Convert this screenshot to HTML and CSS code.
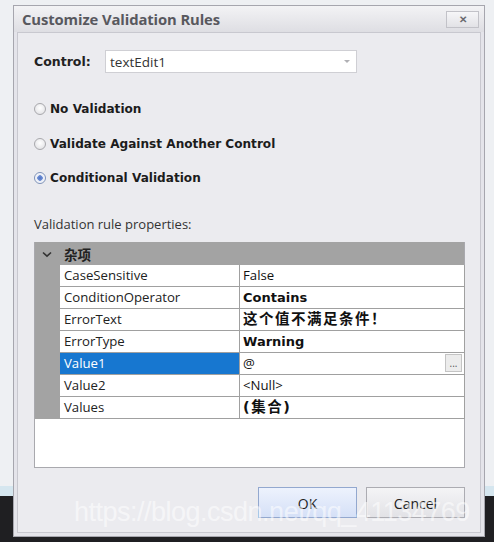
FILE: index.html
```html
<!DOCTYPE html>
<html lang="en">
<head>
    <meta charset="UTF-8">
    <title>Customize Validation Rules</title>
    <link rel="stylesheet" href="styles.css">
</head>
<body>
    <!-- Dialog window -->
    <div class="dialog">
        <div class="title-bar">
            <span class="title">Customize Validation Rules</span>
            <span class="close-btn">&#x2715;</span>
        </div>

        <div class="dialog-body">
            <div class="control-row">
                <span class="control-label">Control:</span>
                <div class="combo">
                    <span>textEdit1</span>
                    <span class="combo-arrow"></span>
                </div>
            </div>

            <div class="radio-list">
                <div class="radio-item"><span class="radio"></span>No Validation</div>
                <div class="radio-item"><span class="radio"></span>Validate Against Another Control</div>
                <div class="radio-item"><span class="radio checked"></span>Conditional Validation</div>
            </div>

            <div class="props-label">Validation rule properties:</div>

            <!-- Property grid -->
            <div class="prop-grid">
                <div class="category">
                    <span class="chevron">
                        <svg width="10" height="7" viewBox="0 0 10 7"><path d="M1 1.5 L5 5.2 L9 1.5" fill="none" stroke="#333" stroke-width="1.6"/></svg>
                    </span>
                    <span class="category-name">杂项</span>
                </div>
                <div class="rows">
                    <div class="row"><div class="name">CaseSensitive</div><div class="value">False</div></div>
                    <div class="row"><div class="name">ConditionOperator</div><div class="value bold">Contains</div></div>
                    <div class="row"><div class="name">ErrorText</div><div class="value bold cjk">这个值不满足条件！</div></div>
                    <div class="row"><div class="name">ErrorType</div><div class="value bold">Warning</div></div>
                    <div class="row selected"><div class="name">Value1</div><div class="value">@<span class="ellipsis">...</span></div></div>
                    <div class="row"><div class="name">Value2</div><div class="value">&lt;Null&gt;</div></div>
                    <div class="row"><div class="name">Values</div><div class="value bold cjk">(集合)</div></div>
                </div>
            </div>

            <div class="buttons">
                <div class="btn btn-ok">OK</div>
                <div class="btn">Cancel</div>
            </div>
        </div>
    </div>

    <div class="watermark">https://blog.csdn.net/qq_41134769</div>
</body>
</html>
```

FILE: styles.css
```css
/* General Styles */
body {
    margin: 0;
    padding: 0;
    width: 494px;
    height: 542px;
    overflow: hidden;
    position: relative;
    font-family: "Open Sans", "Noto Sans CJK SC", sans-serif;
    color: #222;
    background: linear-gradient(to bottom, #eef0f3 0, #eef0f3 486px, #d5e6ef 486px, #d5e6ef 496px, #1f1f22 496px);
}

/* Dialog frame */
.dialog {
    margin: 5px 0 0 13px;
    width: 472px;
    height: 532px;
    border: 1px solid #a6a6ae;
    background-color: #e4e4ea;
    display: flex;
    flex-direction: column;
    box-sizing: border-box;
}
.title-bar {
    height: 26px;
    display: flex;
    align-items: center;
    justify-content: space-between;
    padding: 0 5px 0 8px;
    background: linear-gradient(to bottom, #f3f3f5, #dedee3);
}
.title {
    font-family: "Open Sans", sans-serif;
    font-weight: bold;
    font-size: 14.8px;
    letter-spacing: -0.1px;
    color: #58585e;
}
.close-btn {
    width: 31px;
    height: 15px;
    line-height: 15px;
    text-align: center;
    font-size: 10px;
    font-weight: bold;
    color: #6a6a70;
    border: 1px solid #c2c2c8;
    background: linear-gradient(to bottom, #f6f6f8, #e2e2e6);
}
.dialog-body {
    flex: 1;
    margin: 0 3px 3px 3px;
    border: 1px solid #c8c8cf;
    background-color: #ebebef;
    padding: 0 16px 0 16px;
    display: flex;
    flex-direction: column;
}

/* Control row */
.control-row {
    display: flex;
    align-items: center;
    margin-top: 17px;
    height: 23px;
}
.control-label {
    font-family: "DejaVu Sans", sans-serif;
    font-weight: bold;
    font-size: 12.5px;
    width: 71px;
}
.combo {
    width: 252px;
    height: 23px;
    box-sizing: border-box;
    border: 1px solid #cfcfd4;
    background-color: #fff;
    display: flex;
    align-items: center;
    justify-content: space-between;
    padding: 0 6px 0 4px;
    font-size: 13.5px;
    color: #333;
}
.combo-arrow {
    width: 0;
    height: 0;
    border-left: 3px solid transparent;
    border-right: 3px solid transparent;
    border-top: 3px solid #b0b0b4;
}

/* Radio buttons */
.radio-list {
    margin-top: 26px;
    display: flex;
    flex-direction: column;
    gap: 15px;
}
.radio-item {
    display: flex;
    align-items: center;
    height: 20px;
    font-family: "DejaVu Sans", sans-serif;
    font-weight: bold;
    font-size: 12.1px;
    color: #1c1c1c;
}
.radio-item:last-child {
    margin-top: -1px;
}
.radio {
    width: 10px;
    height: 10px;
    border-radius: 50%;
    border: 1px solid #a8a8ac;
    background: radial-gradient(circle at 50% 40%, #ffffff, #dcdce0);
    margin-right: 4px;
}
.radio.checked {
    border-color: #7e92b8;
    background: radial-gradient(circle, #4f74c4 0, #6f8fd4 2.5px, #e8ecf6 3px, #f6f7fb 5px);
}

.props-label {
    margin-top: 27px;
    font-size: 13px;
    color: #333;
}

/* Property grid */
.prop-grid {
    margin-top: 9px;
    width: 431px;
    height: 226px;
    box-sizing: border-box;
    border: 1px solid #a9a9ae;
    border-top: none;
    background-color: #fff;
}
.category {
    height: 23px;
    background-color: #a3a3a3;
    display: flex;
    align-items: center;
}
.chevron {
    width: 24px;
    display: flex;
    justify-content: center;
    margin-top: 1px;
}
.category-name {
    margin-left: 5px;
    font-family: "Noto Sans CJK SC", sans-serif;
    font-weight: bold;
    font-size: 13.5px;
    color: #222;
}
.rows {
    border-left: 25px solid #a3a3a3;
    width: 430px;
    box-sizing: border-box;
}
.row {
    display: flex;
    height: 22px;
    border-bottom: 1px solid #a0a0a0;
    border-right: 1px solid #a0a0a0;
    box-sizing: border-box;
}
.row .name {
    width: 175px;
    padding-left: 4px;
    border-right: 1px solid #a0a0a0;
    line-height: 21px;
    font-size: 13.2px;
    color: #222;
}
.row .value {
    flex: 1;
    padding-left: 3px;
    line-height: 21px;
    font-size: 13.2px;
    color: #111;
    position: relative;
}
.row .value.bold {
    font-family: "DejaVu Sans", "Noto Sans CJK SC", sans-serif;
    font-weight: bold;
    font-size: 13px;
}
.row .value.cjk {
    font-size: 14.5px;
    letter-spacing: 1.5px;
}
.row.selected .name {
    background-color: #1777d0;
    color: #fff;
}
.ellipsis {
    position: absolute;
    right: 2px;
    top: 1px;
    width: 17px;
    height: 18px;
    line-height: 16px;
    text-align: center;
    font-size: 10px;
    letter-spacing: 0;
    color: #555;
    border: 1px solid #c4c4c4;
    background-color: #ececec;
    box-sizing: border-box;
}

/* Bottom buttons */
.buttons {
    margin-top: 19px;
    display: flex;
    justify-content: flex-end;
    gap: 9px;
    width: 431px;
}
.btn {
    width: 99px;
    height: 31px;
    box-sizing: border-box;
    border: 1px solid #acacb2;
    background: linear-gradient(to bottom, #f4f4f6, #e2e2e6);
    text-align: center;
    line-height: 31px;
    font-size: 14px;
    color: #222;
}
.btn-ok {
    border-color: #93a8cf;
    background: linear-gradient(to bottom, #edf2fd, #d5e0f7);
}

/* Watermark over the screenshot */
.watermark {
    position: absolute;
    left: 74px;
    top: 497px;
    font-family: "Liberation Sans", sans-serif;
    font-size: 27px;
    color: rgba(255, 255, 255, 0.55);
    letter-spacing: -0.5px;
    white-space: nowrap;
}
```
